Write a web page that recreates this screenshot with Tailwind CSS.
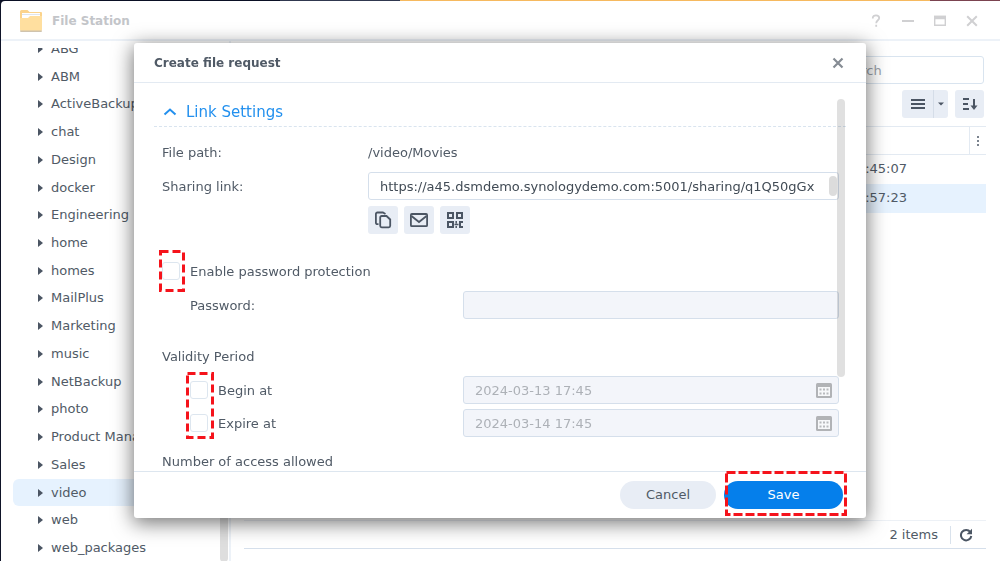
<!DOCTYPE html>
<html lang="en">
<head>
    <meta charset="UTF-8">
    <meta name="viewport" content="width=device-width, initial-scale=1.0">
    <title>File Station - Create file request</title>
    <script src="https://cdn.jsdelivr.net/npm/@tailwindcss/browser@4"></script>
</head>
<body class="h-screen overflow-hidden bg-[#0f1428] font-['DejaVu_Sans',Verdana,sans-serif] text-[13px] leading-5 text-[#505a66]">
    <!-- Desktop strip above the window -->
    <div class="flex h-px">
        <div class="w-[28%] bg-[#0a0f24]"></div>
        <div class="w-[12%] bg-[#30384f]"></div>
        <div class="flex-1 bg-[#f6b95f]"></div>
        <div class="w-[7%] bg-[#7b4350]"></div>
    </div>

    <!-- File Station window -->
    <div class="ml-px flex h-full flex-col rounded-tl-sm bg-white">
        <header class="flex h-10 shrink-0 items-center border-b-2 border-[#edf2f8] pl-[18px] pr-5 pt-px">
            <svg class="h-6 w-6" viewBox="0 0 24 24">
                <path d="M1 2.500a1.500 1.500 0 0 1 1.500-1.500h6l2 2H22a1 1 0 0 1 1 1v8H1z" fill="#fbd38c"/>
                <path d="M3 4h18v6H3z" fill="#fff"/>
                <path d="M3 5.500h18" stroke="#dfe5ee" stroke-width="1"/>
                <path d="M1 9h8l2-2h12v13.500a1.500 1.500 0 0 1-1.500 1.500h-19A1.500 1.500 0 0 1 1 20.500z" fill="#ffdf9f"/>
                <path d="M1 21.500c0 1 .5 1.500 1.500 1.500h19c1 0 1.500-.5 1.500-1.500z" fill="#cfc3ae"/>
            </svg>
            <h1 class="ml-[9px] text-xs font-bold text-[#c3c5c9]">File Station</h1>
            <div class="ml-auto flex gap-4 text-[#d0d0d2]">
                <button type="button" aria-label="Help">
                    <svg class="h-4 w-4" viewBox="0 0 16 16" fill="none" stroke="currentColor" stroke-width="1.800"><path d="M4.800 5.500V5c0-1.600 1.300-2.700 3.200-2.700S11.200 3.300 11.200 5c0 2.200-3 2.400-3 5.200M8.200 11.800v2"/></svg>
                </button>
                <button type="button" aria-label="Minimize">
                    <svg class="h-4 w-4" viewBox="0 0 16 16" stroke="currentColor" stroke-width="2"><path d="M2 8h12"/></svg>
                </button>
                <button type="button" aria-label="Maximize">
                    <svg class="h-4 w-4" viewBox="0 0 16 16" fill="none" stroke="currentColor"><path d="M2.700 3.500h10.600v8.800H2.700z" stroke-width="1.400"/><path d="M2 4.500h12" stroke-width="3.500"/></svg>
                </button>
                <button type="button" aria-label="Close">
                    <svg class="h-4 w-4" viewBox="0 0 16 16" stroke="currentColor" stroke-width="2"><path d="M3.200 3.200l9.600 9.600M12.800 3.200l-9.600 9.600"/></svg>
                </button>
            </div>
        </header>

        <div class="flex min-h-0 flex-1">
            <!-- Folder tree -->
            <nav aria-label="Folders" class="relative w-[230px] shrink-0 border-r-2 border-[#edf2f8] pl-3 pt-[7px]">
                <div class="h-full overflow-hidden">
                    <ul id="folder-tree" class="-mt-[13px] flex h-[527px] flex-col"></ul>
                </div>
                <div class="absolute bottom-0 right-px top-24 w-2 rounded-full bg-[#dedede]"></div>
            </nav>

            <!-- File list -->
            <main class="flex min-w-0 flex-1 flex-col pb-[13px] pl-[13px] pr-[14px]">
                <div class="mr-[2px] mt-[15px] flex justify-end">
                    <input type="search" aria-label="Search" placeholder="Search" class="h-7 w-[178px] rounded-[3px] border border-[#d9e4ef] bg-white px-[30px] placeholder:text-[#9aa1a9]">
                </div>
                <div class="mr-[2px] mt-[6px] flex justify-end gap-[7px]">
                    <div class="flex h-7 rounded-[3px] bg-[#e8edf5] text-[#4b5563]">
                        <button type="button" aria-label="List view" class="flex w-8 items-center justify-center border-r border-[#d5dde8]">
                            <svg class="h-[14px] w-[14px]" viewBox="0 0 14 14" stroke="currentColor" stroke-width="2"><path d="M0 3h14M0 7h14M0 11h14"/></svg>
                        </button>
                        <button type="button" aria-label="View options" class="flex w-[14px] items-center justify-center">
                            <svg class="h-[6px] w-[6px]" viewBox="0 0 6 6" fill="currentColor"><path d="M0 1.500h6L3 4.500z"/></svg>
                        </button>
                    </div>
                    <button type="button" aria-label="Sort" class="flex h-7 w-[29px] items-center justify-center rounded-[3px] bg-[#e8edf5] text-[#4b5563]">
                        <svg class="h-4 w-4" viewBox="0 0 16 16" fill="none" stroke="currentColor" stroke-width="2"><path d="M1 3h6M1 8h5M1 13h6M12 3v8"/><path d="M8.500 9.500h7L12 14z" fill="currentColor" stroke="none"/></svg>
                    </button>
                </div>
                <table class="mt-2 w-full border-collapse text-left">
                    <thead>
                        <tr class="h-7 border-y border-[#e3eaf2]">
                            <th></th>
                            <th class="w-[17px] border-l border-[#e3eaf2] p-0">
                                <svg class="mx-auto h-3 w-1" viewBox="0 0 4 12" fill="#7b838e"><path d="M1 1h2v2H1zM1 5h2v2H1zM1 9h2v2H1z"/></svg>
                            </th>
                        </tr>
                    </thead>
                    <tbody>
                        <tr class="h-[29px]"><td class="pr-[62px] text-right">2024-03-13 17:45:07</td><td></td></tr>
                        <tr class="h-[29px] bg-[#e6f2fe]"><td class="pr-[62px] text-right">2024-03-13 16:57:23</td><td></td></tr>
                    </tbody>
                </table>
                <footer class="mt-auto flex h-[29px] items-center justify-end border-y border-b-[#d5dfeb] border-t-[#edf1f6] pr-[13px]">
                    <span>2 items</span>
                    <div class="ml-3 mr-2 h-[18px] w-px bg-[#d9e2ec]"></div>
                    <button type="button" aria-label="Refresh">
                        <svg class="h-[14px] w-[14px]" viewBox="0 0 14 14" fill="none" stroke="#4b5563" stroke-width="2"><path d="M11.300 4A5.200 5.200 0 1 0 12.300 8"/><path d="M13 .8v5.400H7.600z" fill="#4b5563" stroke="none"/></svg>
                    </button>
                </footer>
            </main>
        </div>
    </div>

    <!-- Create file request dialog -->
    <div class="fixed inset-0 px-[134px] py-[43px]">
        <form role="dialog" aria-labelledby="dialog-title" class="flex h-full flex-col rounded-[3px] bg-white shadow-[0_4px_20px_1px_rgba(0,0,0,0.55)]">
            <div class="flex h-10 shrink-0 items-center justify-between border-b border-[#e3eaf2] px-5">
                <h2 id="dialog-title" class="text-xs font-bold">Create file request</h2>
                <button type="button" aria-label="Close dialog">
                    <svg class="h-4 w-4" viewBox="0 0 16 16" stroke="#868c94" stroke-width="2.200"><path d="M3.500 3.500l9 9M12.500 3.500l-9 9"/></svg>
                </button>
            </div>

            <div class="relative min-h-0 flex-1 overflow-hidden px-5 pt-[14px]">
                <button type="button" aria-expanded="true" class="flex h-[30px] w-full items-center border-b border-dashed border-[#d9e4ef] pl-[9px] text-[15px] text-[#2390ee]">
                    <svg class="h-[14px] w-[14px]" viewBox="0 0 14 14" fill="none" stroke="currentColor" stroke-width="2"><path d="M1.500 9.500L7 4.500l5.500 5"/></svg>
                    <span class="ml-[9px]">Link Settings</span>
                </button>

                <div class="pl-2 pr-[7px] pt-3">
                    <div class="flex h-7 items-center">
                        <span class="w-[206px]">File path:</span>
                        <span>/video/Movies</span>
                    </div>
                    <div class="mt-[5px] flex h-7 items-center">
                        <label for="sharing-link" class="w-[206px] pt-px">Sharing link:</label>
                        <div class="relative flex-1">
                            <input id="sharing-link" type="text" readonly value="https://a45.dsmdemo.synologydemo.com:5001/sharing/q1Q50gGx" class="h-7 w-full rounded-[3px] border border-[#d5dfeb] px-[11px] text-[#414b55]">
                            <div class="absolute right-[2px] top-1 h-5 w-2 rounded-full bg-[#dcdcdc]"></div>
                        </div>
                    </div>
                    <div class="ml-[206px] mt-[6px] flex gap-[6px] text-[#4b5563]">
                        <button type="button" aria-label="Copy link" class="flex h-7 w-[30px] items-center justify-center rounded-[3px] bg-[#e8edf5]">
                            <svg class="h-[18px] w-[18px]" viewBox="0 0 18 18" fill="none" stroke="currentColor" stroke-width="1.800"><path d="M4.500 13.200H3.400a1.500 1.500 0 0 1-1.500-1.500V3a1.500 1.500 0 0 1 1.500-1.500h5.500L11.500 3"/><path d="M6.200 6.500A1.500 1.500 0 0 1 7.700 5h4.800l3.700 3.500v6.300a1.500 1.500 0 0 1-1.500 1.500h-7a1.500 1.500 0 0 1-1.500-1.500z"/></svg>
                        </button>
                        <button type="button" aria-label="Send by email" class="flex h-7 w-[30px] items-center justify-center rounded-[3px] bg-[#e8edf5]">
                            <svg class="h-[18px] w-5" viewBox="0 0 20 18" fill="none" stroke="currentColor" stroke-width="1.800"><rect x="1.900" y="3" width="16.200" height="12.200" rx="1"/><path d="M2.500 5L10 11l7.500-6"/></svg>
                        </button>
                        <button type="button" aria-label="QR code" class="flex h-7 w-[30px] items-center justify-center rounded-[3px] bg-[#e8edf5]">
                            <svg class="h-[18px] w-[18px]" viewBox="0 0 18 18" fill="none" stroke="currentColor" stroke-width="2"><path d="M2 2h5v5H2zM11 2h5v5h-5zM2 11h5v5H2z"/><path d="M17 11h-3v5h3"/><path d="M8.500 13.500h4M10.200 10v2.500M10.200 15v2" stroke-width="1.500"/></svg>
                        </button>
                    </div>

                    <div class="mt-[23px] flex h-7 items-center">
                        <div class="relative h-[18px] w-[18px]">
                            <input id="enable-password" type="checkbox" class="block h-[18px] w-[18px] appearance-none rounded-[3px] border border-[#dde6ef] bg-white">
                            <svg class="pointer-events-none absolute -left-[3px] -top-3 h-[42px] w-[26px]" fill="none" stroke="#f5131b" stroke-width="3" stroke-dasharray="8 4"><rect x="1.500" y="1.500" width="23" height="39"/></svg>
                        </div>
                        <label for="enable-password" class="ml-[10px] pt-px">Enable password protection</label>
                    </div>
                    <div class="mt-[6px] flex h-7 items-center pl-7">
                        <label for="password" class="w-[273px] pt-px">Password:</label>
                        <input id="password" type="password" disabled class="h-7 flex-1 rounded-[3px] border border-[#d5dfeb] bg-[#f3f5fa]">
                    </div>

                    <fieldset class="mt-[23px]">
                        <legend class="flex h-7 items-center pt-px">Validity Period</legend>
                        <div class="relative mt-[6px] flex flex-col gap-[5px] pl-7">
                            <div class="flex h-7 items-center">
                                <input id="begin-at" type="checkbox" class="h-[18px] w-[18px] appearance-none rounded-[3px] border border-[#dde6ef] bg-white">
                                <label for="begin-at" class="ml-[10px] w-[245px] pt-px">Begin at</label>
                                <div class="relative flex-1">
                                    <input type="text" aria-label="Begin date" disabled value="2024-03-13 17:45" class="h-7 w-full rounded-[3px] border border-[#d5dfeb] bg-[#f3f5fa] px-[11px] text-[#adb1b7]">
                                    <svg class="absolute right-[7px] top-[6px] h-4 w-4" viewBox="0 0 16 16"><rect width="16" height="15" y="1" rx="1.500" fill="#b1b3b6"/><path d="M2 5h12v9H2z" fill="#f7f8fa"/><path d="M3.500 6.500h2v2h-2zM7 6.500h2v2H7zM10.500 6.500h2v2h-2zM3.500 10.500h2v2h-2zM7 10.500h2v2H7zM10.500 10.500h2v2h-2z" fill="#b8babd"/></svg>
                                </div>
                            </div>
                            <div class="flex h-7 items-center">
                                <input id="expire-at" type="checkbox" class="h-[18px] w-[18px] appearance-none rounded-[3px] border border-[#dde6ef] bg-white">
                                <label for="expire-at" class="ml-[10px] w-[245px] pt-px">Expire at</label>
                                <div class="relative flex-1">
                                    <input type="text" aria-label="Expiry date" disabled value="2024-03-14 17:45" class="h-7 w-full rounded-[3px] border border-[#d5dfeb] bg-[#f3f5fa] px-[11px] text-[#adb1b7]">
                                    <svg class="absolute right-[7px] top-[6px] h-4 w-4" viewBox="0 0 16 16"><rect width="16" height="15" y="1" rx="1.500" fill="#b1b3b6"/><path d="M2 5h12v9H2z" fill="#f7f8fa"/><path d="M3.500 6.500h2v2h-2zM7 6.500h2v2H7zM10.500 6.500h2v2h-2zM3.500 10.500h2v2h-2zM7 10.500h2v2H7zM10.500 10.500h2v2h-2z" fill="#b8babd"/></svg>
                                </div>
                            </div>
                            <svg class="pointer-events-none absolute -top-1 left-6 h-[67px] w-7" fill="none" stroke="#f5131b" stroke-width="3" stroke-dasharray="8 4"><rect x="1.500" y="1.500" width="25" height="64"/></svg>
                        </div>
                    </fieldset>
                    <div class="mt-[10px] flex h-7 items-center pt-px">Number of access allowed</div>
                </div>

                <!-- Scroll thumb -->
                <div class="absolute right-[21px] top-4 h-[278px] w-2 rounded-full bg-black/12"></div>
            </div>

            <div class="flex h-[47px] shrink-0 items-center justify-end gap-2 border-t border-[#dde6ef] pr-[23px]">
                <button type="button" class="h-7 w-24 rounded-full bg-[#e8edf5]">Cancel</button>
                <div class="relative">
                    <button type="submit" class="h-7 w-[119px] rounded-full bg-[#057feb] text-white">Save</button>
                    <svg class="pointer-events-none absolute -top-[10px] left-px h-[45px] w-[122px]" fill="none" stroke="#f5131b" stroke-width="3" stroke-dasharray="9 3"><rect x="1.500" y="1.500" width="119" height="42"/></svg>
                </div>
            </div>
        </form>
    </div>

    <script>
        const folders = [
            'ABG', 'ABM', 'ActiveBackup', 'chat', 'Design', 'docker', 'Engineering', 'home', 'homes', 'MailPlus',
            'Marketing', 'music', 'NetBackup', 'photo', 'Product Management', 'Sales', 'video', 'web', 'web_packages'
        ];
        const selected = 'video';
        const tree = document.getElementById('folder-tree');

        folders.forEach((name) => {
            const item = document.createElement('li');
            item.className = 'flex min-h-0 flex-1';
            item.innerHTML = `
                <a href="#" class="flex w-full items-center rounded-md pl-[25px] whitespace-nowrap">
                    <svg class="mr-2 h-2 w-[5px]" viewBox="0 0 5 8" fill="#4b5563"><path d="M0 0l5 4-5 4z"/></svg>
                    <span>${name}</span>
                </a>`;
            if (name === selected) {
                item.firstElementChild.classList.add('bg-[#e6f2fe]');
            }
            tree.appendChild(item);
        });
    </script>
</body>
</html>
